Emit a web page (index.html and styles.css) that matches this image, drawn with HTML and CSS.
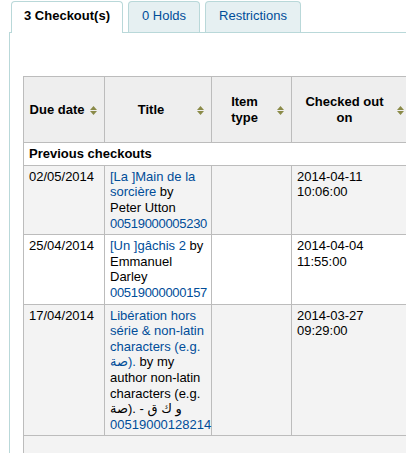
FILE: index.html
```html
<!DOCTYPE html>
<html lang="en">
<head>
    <meta charset="UTF-8">
    <meta name="viewport" content="width=device-width, initial-scale=1.0">
    <title>Checkouts</title>
    <link rel="stylesheet" href="styles.css">
</head>
<body>
<div class="page">
    <ul class="tabs">
        <li class="tab active">3 Checkout(s)</li>
        <li class="tab"><a href="#holds">0 Holds</a></li>
        <li class="tab"><a href="#restrictions">Restrictions</a></li>
    </ul>

    <div class="panel">
        <table class="checkouts">
            <colgroup>
                <col class="c-due">
                <col class="c-title">
                <col class="c-type">
                <col class="c-date">
                <col class="c-from">
            </colgroup>
            <thead>
                <tr>
                    <th>Due date<svg class="sort" viewBox="0 0 7 9"><path d="M3.5 0L7 4H0z M0 5H7L3.5 9z"/></svg></th>
                    <th>Title<svg class="sort" viewBox="0 0 7 9"><path d="M3.5 0L7 4H0z M0 5H7L3.5 9z"/></svg></th>
                    <th>Item type<svg class="sort" viewBox="0 0 7 9"><path d="M3.5 0L7 4H0z M0 5H7L3.5 9z"/></svg></th>
                    <th>Checked out on<svg class="sort" viewBox="0 0 7 9"><path d="M3.5 0L7 4H0z M0 5H7L3.5 9z"/></svg></th>
                    <th>Checked out from<svg class="sort" viewBox="0 0 7 9"><path d="M3.5 0L7 4H0z M0 5H7L3.5 9z"/></svg></th>
                </tr>
            </thead>
            <tbody>
                <tr class="group">
                    <td colspan="5">Previous checkouts</td>
                </tr>
                <tr class="odd">
                    <td>02/05/2014</td>
                    <td><a href="#">[La ]Main de la sorcière</a> by Peter Utton <a class="barcode" href="#">00519000005230</a></td>
                    <td></td>
                    <td>2014-04-11 10:06:00</td>
                    <td>Centerville</td>
                </tr>
                <tr>
                    <td>25/04/2014</td>
                    <td><a href="#">[Un ]gâchis 2</a> by Emmanuel Darley <a class="barcode" href="#">00519000000157</a></td>
                    <td></td>
                    <td>2014-04-04 11:55:00</td>
                    <td>Centerville</td>
                </tr>
                <tr class="odd">
                    <td>17/04/2014</td>
                    <td><a href="#">Libération hors série &amp; non-latin characters (e.g. <bdi>صة</bdi>).</a> by my author non-latin characters (e.g. <bdi>صة</bdi>). - <bdi>و ك ق</bdi> <a class="barcode" href="#">00519000128214</a></td>
                    <td></td>
                    <td>2014-03-27 09:29:00</td>
                    <td>Centerville</td>
                </tr>
            </tbody>
            <tfoot>
                <tr>
                    <td colspan="5"></td>
                </tr>
            </tfoot>
        </table>
    </div>
</div>
</body>
</html>
```

FILE: styles.css
```css
body {margin: 0; font-family: "Liberation Sans", Arial, "DejaVu Sans", sans-serif; font-size: 13px; color: #000; background: #fff; overflow: hidden;}

.page {width: 700px;}

/* tabs */
.tabs {display: flex; gap: 5px; list-style: none; margin: 1px 0 0 11px; padding: 0; position: relative; z-index: 1;}

.tab {border: 1px solid #b9d8d9; border-bottom: 0; border-radius: 4px 4px 0 0; background: #e6f0f2; padding: 6px 13px 9px; line-height: 15px;}

.tab.active {background: #fff; font-weight: bold; padding: 6px 12px 10px; margin-bottom: -1px;}

.tab a {color: #004d99; text-decoration: none;}

.panel {margin-left: 9px; border: 1px solid #b9d8d9; padding: 43px 13px 0; min-height: 500px;}

/* checkouts table */
.checkouts {border-collapse: collapse; table-layout: fixed; width: 528px;}

.c-due {width: 81px;}
.c-title {width: 107px;}
.c-type {width: 80px;}
.c-date {width: 120px;}
.c-from {width: 140px;}

.checkouts th {position: relative; background: #eee; border: 1px solid #bcbcbc; padding: 17px 19px 17px 5px; line-height: 15.6px; text-align: center; vertical-align: middle; font-weight: bold;}

.sort {position: absolute; right: 7px; top: 50%; margin-top: -4px; width: 7px; height: 9px; fill: #8a8a48;}

.checkouts td {border: 1px solid #bcbcbc; padding: 3px 4px 3px 5px; line-height: 15.6px; vertical-align: top; background: #fff;}

.checkouts tr.odd td {background: #f3f3f3;}

.checkouts tr.group td {font-weight: bold;}

.checkouts tfoot td {background: #f3f3f3; height: 40px;}

.checkouts a {color: #004d99; text-decoration: none;}

.checkouts .barcode {letter-spacing: -0.3px;}
```
